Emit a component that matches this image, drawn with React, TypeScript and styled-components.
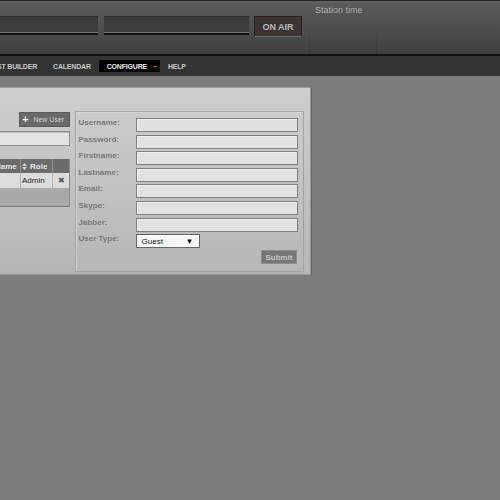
import React from 'react'
import styled, { createGlobalStyle } from 'styled-components'

const GlobalStyle = createGlobalStyle`
  html, body {
    margin: 0;
    padding: 0;
    background: #7c7c7c;
    font-family: "Liberation Sans", Arial, sans-serif;
    overflow: hidden;
  }
`

const Header = styled.header`
  height: 56px;
  box-sizing: border-box;
  border-top: 1px solid #262626;
  border-bottom: 2px solid #111;
  background: linear-gradient(#5d5d5d, #3f3f3f);
  display: flex;
  align-items: flex-start;
`

const Displays = styled.div`
  display: flex;
  align-items: flex-start;
  gap: 6px;
  margin-left: -40px;
  padding-top: 15px;
`

const Display = styled.div<{ $width: number }>`
  width: ${(p) => p.$width}px;
  height: 19px;
  box-sizing: border-box;
  border-top: 1px solid #2c2c2c;
  background: linear-gradient(
    #3c3c3c 0,
    #3c3c3c 15px,
    #767676 15px,
    #767676 16px,
    #121212 16px,
    #121212 19px
  );
`

const OnAir = styled.button`
  margin-left: -1px;
  width: 48px;
  height: 21px;
  box-sizing: border-box;
  border: 1px solid #232323;
  border-bottom: 1px solid #6a6a6a;
  background: #3b3433;
  color: #b9b9b9;
  font-family: inherit;
  font-size: 9px;
  font-weight: bold;
  padding: 0;
`

// faint divider that only shows in the lower half of the header
const Cell = styled.div<{ $width: number; $offset?: number }>`
  width: ${(p) => p.$width}px;
  margin-left: ${(p) => p.$offset ?? 0}px;
  height: 53px;
  box-sizing: border-box;
  border-left: 1px solid;
  border-image: linear-gradient(transparent 45%, rgba(0, 0, 0, 0.14)) 1;
  padding: 4px 0 0 5px;
  color: #acacac;
  font-size: 9px;
`

const NavBar = styled.nav`
  height: 20px;
  background: #343434;
  display: flex;
  align-items: center;
`

const NavList = styled.ul`
  display: flex;
  align-items: center;
  list-style: none;
  margin: 0 0 0 -34px;
  padding: 0;
`

const NavItem = styled.li<{ $active?: boolean }>`
  display: flex;
  align-items: center;
  gap: 6px;
  height: 12px;
  padding: ${(p) => (p.$active ? '0 3px 0 8px' : '0 8px')};
  background: ${(p) => (p.$active ? '#000' : 'transparent')};
  color: ${(p) => (p.$active ? '#ececec' : '#c6c6c6')};
  font-size: 7px;
  letter-spacing: -0.2px;
  font-weight: bold;
  text-transform: uppercase;
  white-space: nowrap;
`

const Caret = styled.span`
  width: 4px;
  height: 1px;
  background: #e03a2a;
`

const Content = styled.main`
  padding-top: 11px;
`

const Panel = styled.section`
  margin-left: -137px;
  width: 448px;
  height: 188px;
  box-sizing: border-box;
  padding: 23px 6px 0 6px;
  border: 1px solid #979797;
  box-shadow: 1px 1px 0 #666;
  background: linear-gradient(#cecece, #b6b6b6);
  display: flex;
  gap: 5px;
`

const UsersColumn = styled.div`
  width: 200px;
  display: flex;
  flex-direction: column;
  padding-top: 1px;
`

const NewUserButton = styled.button`
  align-self: flex-end;
  width: 51px;
  height: 15px;
  box-sizing: border-box;
  border: 1px solid #5a5a5a;
  background: #6a6a6a;
  color: #cdd2dc;
  font-family: inherit;
  font-size: 7px;
  white-space: nowrap;
  padding: 0 0 0 3px;
  display: flex;
  align-items: center;
  gap: 5px;

  b {
    color: #fff;
    font-size: 10px;
  }
`

const Search = styled.input`
  margin-top: 4px;
  height: 15px;
  box-sizing: border-box;
  border: 1px solid #8e8e8e;
  background: #e3e3e3;
  box-shadow: inset 1px 1px 0 #bdbdbd;
  padding: 0;
`

const Table = styled.div`
  margin-top: 13px;
  border-right: 1px solid #8a8a8a;
  border-bottom: 1px solid #7a7a7a;
  background: #a9a9a9;
  height: 48px;
  box-sizing: border-box;
`

const Row = styled.div<{ $head?: boolean }>`
  display: grid;
  grid-template-columns: 115px 35px 32px 1fr;
  height: ${(p) => (p.$head ? 14 : 15)}px;
  background: ${(p) => (p.$head ? '#6b6b6b' : '#dcdcdc')};
  color: ${(p) => (p.$head ? '#e4e4e4' : '#222')};
  font-size: 8px;
  font-weight: ${(p) => (p.$head ? 'bold' : 'normal')};
`

const TCell = styled.div<{ $head?: boolean; $center?: boolean }>`
  display: flex;
  align-items: center;
  justify-content: ${(p) => (p.$center ? 'center' : 'flex-start')};
  gap: 3px;
  padding-left: 1px;
  border-left: 1px solid ${(p) => (p.$head ? '#8e8e8e' : '#b4b4b4')};
  overflow: hidden;
  white-space: nowrap;
`

const Remove = styled.span`
  color: #555;
  font-size: 8px;
`

const SortIcon = () => (
  <svg width="5" height="7" viewBox="0 0 5 7">
    <path d="M2.5 0 L5 3 L0 3 Z M0 4 L5 4 L2.5 7 Z" fill="#d6d6d6" />
  </svg>
)

const Fieldset = styled.form`
  width: 230px;
  height: 161px;
  box-sizing: border-box;
  border: 1px solid #a3a3a3;
  box-shadow: inset 1px 1px 0 #d4d4d4;
  padding: 6px 5px 0 3px;
  display: flex;
  flex-direction: column;
`

const Fields = styled.div`
  display: grid;
  grid-template-columns: 57px 162px;
  grid-auto-rows: 14px;
  row-gap: 2.6px;
`

const Label = styled.label`
  display: flex;
  align-items: flex-start;
  color: #797979;
  font-size: 8px;
  font-weight: bold;
`

const Input = styled.input`
  height: 14px;
  box-sizing: border-box;
  border: 1px solid #7f7f7f;
  background: #e1e1e1;
  box-shadow: inset 1px 1px 0 #f0f0f0;
  padding: 0;
`

const Select = styled.div`
  width: 64px;
  height: 14px;
  box-sizing: border-box;
  border: 1px solid #666;
  background: #f7f7f7;
  display: flex;
  align-items: center;
  justify-content: space-between;
  padding: 0 5px;
  font-size: 8px;
  color: #111;
`

const Submit = styled.button`
  align-self: flex-end;
  margin: 2px 1px 0 0;
  width: 36px;
  height: 14px;
  box-sizing: border-box;
  border: 1px solid #8d8d8d;
  background: #777;
  color: #c4c4c4;
  font-family: inherit;
  font-size: 8px;
  font-weight: bold;
  padding: 0;
`

const fields = ['Username', 'Password', 'Firstname', 'Lastname', 'Email', 'Skype', 'Jabber']

export default function App() {
  return (
    <>
      <GlobalStyle />
      <Header>
        <Displays>
          <Display $width={138} />
          <Display $width={145} />
          <OnAir>ON AIR</OnAir>
        </Displays>
        <Cell $width={70} $offset={7}>
          Station time
        </Cell>
        <Cell $width={130} />
      </Header>

      <NavBar>
        <NavList>
          <NavItem>Playlist Builder</NavItem>
          <NavItem>Calendar</NavItem>
          <NavItem $active>
            Configure <Caret />
          </NavItem>
          <NavItem>Help</NavItem>
        </NavList>
      </NavBar>

      <Content>
        <Panel>
          <UsersColumn>
            <NewUserButton>
              <b>+</b> New User
            </NewUserButton>
            <Search />
            <Table>
              <Row $head>
                <TCell $head>
                  <SortIcon /> Login
                </TCell>
                <TCell $head>
                  <SortIcon /> Name
                </TCell>
                <TCell $head>
                  <SortIcon /> Role
                </TCell>
                <TCell $head />
              </Row>
              <Row>
                <TCell>admin</TCell>
                <TCell />
                <TCell>Admin</TCell>
                <TCell $center>
                  <Remove>✖</Remove>
                </TCell>
              </Row>
            </Table>
          </UsersColumn>

          <Fieldset>
            <Fields>
              {fields.map((f) => (
                <React.Fragment key={f}>
                  <Label>{f}:</Label>
                  <Input type={f === 'Password' ? 'password' : 'text'} />
                </React.Fragment>
              ))}
              <Label>User Type:</Label>
              <Select>
                <span>Guest</span>
                <span>▼</span>
              </Select>
            </Fields>
            <Submit type="button">Submit</Submit>
          </Fieldset>
        </Panel>
      </Content>
    </>
  )
}
